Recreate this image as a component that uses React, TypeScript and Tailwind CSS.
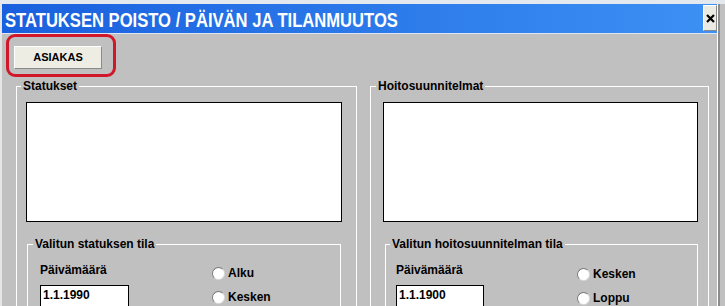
const font = { fontFamily: '"Liberation Sans", Arial, sans-serif' };

const Radio = ({ label }: { label: string }) => (
  <div className="flex h-[24px] items-center">
    <span className="h-[13px] w-[13px] rounded-full border border-[#7a7a7a] border-b-[#d8d8d8] border-r-[#d8d8d8] bg-white" />
    <span className="ml-[3px] text-[12px] font-bold leading-[14px] text-black">{label}</span>
  </div>
);

const App = () => {
  return (
    <div
      className="h-[306px] w-[725px] overflow-hidden bg-[#c0c0c0]"
      style={font}
    >
      <div className="h-[4px] w-full bg-[#e4e8ef]" />
      <div className="w-[720px] border-r-2 border-[#8c8c8c]">
        <div className="h-[302px] border-l-2 border-r border-l-[#e6e6e6] border-r-white bg-[#c0c0c0]">
          {/* title bar */}
          <div className="flex h-[30px] items-start border-b border-[#dfe6f0] bg-gradient-to-r from-[#1a60de] to-[#3d90f4]">
            <span className="ml-[3px] mt-[5px] origin-left scale-x-[0.83] whitespace-nowrap text-[20px] font-bold leading-[22px] text-white">
              STATUKSEN POISTO / PÄIVÄN JA TILANMUUTOS
            </span>
            <button className="ml-auto mt-[1px] flex h-[26px] w-[14px] items-center justify-center border border-b-[#8a8a8a] border-l-white border-r-[#8a8a8a] border-t-white bg-[#ecebe3]">
              <svg width="9" height="9" viewBox="0 0 9 9">
                <path d="M1 1 L8 8 M8 1 L1 8" stroke="#000" strokeWidth="2.2" />
              </svg>
            </button>
          </div>

          {/* asiakas button with red outline */}
          <div className="ml-[4px] h-[43px] w-[110px] rounded-[9px] border-[3px] border-[#d0182a] pl-[5px] pt-[9px]">
            <button className="flex h-[23px] w-[88px] items-center justify-center border border-b-[#8a8a8a] border-l-white border-r-[#8a8a8a] border-t-white bg-[#eeede4] text-[11px] font-bold text-black">
              ASIAKAS
            </button>
          </div>

          {/* groups */}
          <div className="mt-[2px] flex">
            <fieldset className="ml-[14px] h-[260px] w-[341px] border border-white">
              <legend className="ml-[4px] px-[2px] text-[12px] font-bold leading-[14px] text-black">
                Statukset
              </legend>
              <div className="ml-[9px] mt-[9px] h-[120px] w-[316px] border border-black bg-white" />
              <fieldset className="ml-[10px] mt-[15px] h-[120px] w-[314px] border border-white">
                <legend className="ml-[5px] px-[2px] text-[12px] font-bold leading-[14px] text-black">
                  Valitun statuksen tila
                </legend>
                <div className="flex">
                  <div className="w-[184px] pl-[12px]">
                    <div className="mt-[12px] text-[12px] font-bold leading-[14px] text-black">
                      Päivämäärä
                    </div>
                    <div className="mt-[8px] h-[22px] w-[89px] border border-black bg-white pl-[2px] pt-[2px] text-[12px] font-bold leading-[14px] text-black">
                      1.1.1990
                    </div>
                  </div>
                  <div className="mt-[10px]">
                    <Radio label="Alku" />
                    <Radio label="Kesken" />
                  </div>
                </div>
              </fieldset>
            </fieldset>

            <fieldset className="ml-[13px] h-[260px] w-[339px] border border-white">
              <legend className="ml-[5px] px-[2px] text-[12px] font-bold leading-[14px] text-black">
                Hoitosuunnitelmat
              </legend>
              <div className="ml-[12px] mt-[9px] h-[120px] w-[315px] border border-black bg-white" />
              <fieldset className="ml-[14px] mt-[15px] h-[120px] w-[313px] border border-white">
                <legend className="ml-[4px] px-[2px] text-[12px] font-bold leading-[14px] text-black">
                  Valitun hoitosuunnitelman tila
                </legend>
                <div className="flex">
                  <div className="w-[191px] pl-[10px]">
                    <div className="mt-[12px] text-[12px] font-bold leading-[14px] text-black">
                      Päivämäärä
                    </div>
                    <div className="mt-[8px] h-[22px] w-[88px] border border-black bg-white pl-[2px] pt-[2px] text-[12px] font-bold leading-[14px] text-black">
                      1.1.1900
                    </div>
                  </div>
                  <div className="mt-[11px]">
                    <Radio label="Kesken" />
                    <Radio label="Loppu" />
                  </div>
                </div>
              </fieldset>
            </fieldset>
          </div>
        </div>
      </div>
    </div>
  );
};

export default App;
